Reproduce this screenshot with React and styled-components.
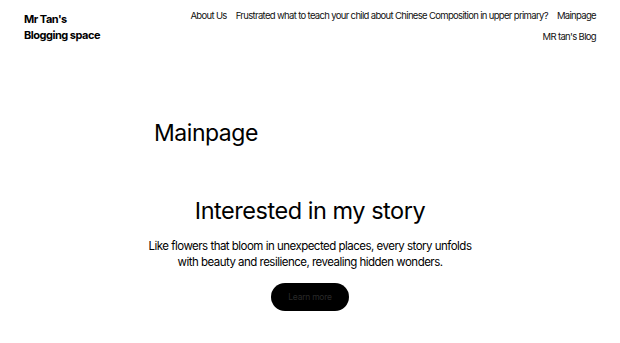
import React from "react"
import styled, { createGlobalStyle } from "styled-components"

const GlobalStyle = createGlobalStyle`
body {
  margin: 0;
  background: #ffffff;
  font-family: Inter, "Noto Sans", sans-serif;
  color: #000;
}
`

const navItems = [
  "About Us",
  "Frustrated what to teach your child about Chinese Composition in upper primary?",
  "Mainpage",
  "MR tan's Blog",
]

export default function App() {
  return (
    <>
      <GlobalStyle />
      <Page>
        <Header>
          <Brand>
            Mr Tan's
            <br />
            Blogging space
          </Brand>
          <Nav>
            {navItems.map((item) => (
              <NavLink key={item}>{item}</NavLink>
            ))}
          </Nav>
        </Header>
        <Main>
          <PageTitle>Mainpage</PageTitle>
          <Hero>
            <HeroTitle>Interested in my story</HeroTitle>
            <HeroText>
              Like flowers that bloom in unexpected places, every story unfolds
              with beauty and resilience, revealing hidden wonders.
            </HeroText>
            <PillButton>Learn more</PillButton>
          </Hero>
        </Main>
      </Page>
    </>
  )
}

const Page = styled.div`
width: 620px;
min-height: 343px;
`

const Header = styled.header`
display: flex;
justify-content: space-between;
align-items: flex-start;
padding: 11px 24px 0 24px;
`

const Brand = styled.div`
font-size: 11px;
font-weight: 700;
line-height: 16px;
letter-spacing: -0.045em;
white-space: nowrap;
`

const Nav = styled.nav`
display: flex;
flex-wrap: wrap;
justify-content: flex-end;
column-gap: 9px;
row-gap: 9px;
max-width: 412px;
margin-top: -1px;
`

const NavLink = styled.a`
font-size: 9.5px;
line-height: 12px;
letter-spacing: -0.07em;
color: #111;
cursor: pointer;
`

const Main = styled.main`
display: flex;
flex-direction: column;
align-items: center;
padding-top: 76px;
`

const PageTitle = styled.h1`
width: 312px;
margin: 0;
font-size: 23px;
font-weight: 400;
line-height: 28px;
letter-spacing: -0.02em;
`

const Hero = styled.section`
display: flex;
flex-direction: column;
align-items: center;
margin-top: 49px;
`

const HeroTitle = styled.h2`
margin: 0;
font-size: 23.5px;
font-weight: 400;
line-height: 30px;
letter-spacing: -0.02em;
`

const HeroText = styled.p`
margin: 12px 0 0 0;
width: 330px;
text-align: center;
font-size: 11.5px;
line-height: 16px;
letter-spacing: -0.045em;
`

const PillButton = styled.button`
margin-top: 13px;
width: 78px;
height: 28px;
border: none;
border-radius: 14px;
background: #000;
color: #2a2a2a;
font-family: Inter, sans-serif;
font-size: 8.5px;
letter-spacing: -0.03em;
cursor: pointer;
`
